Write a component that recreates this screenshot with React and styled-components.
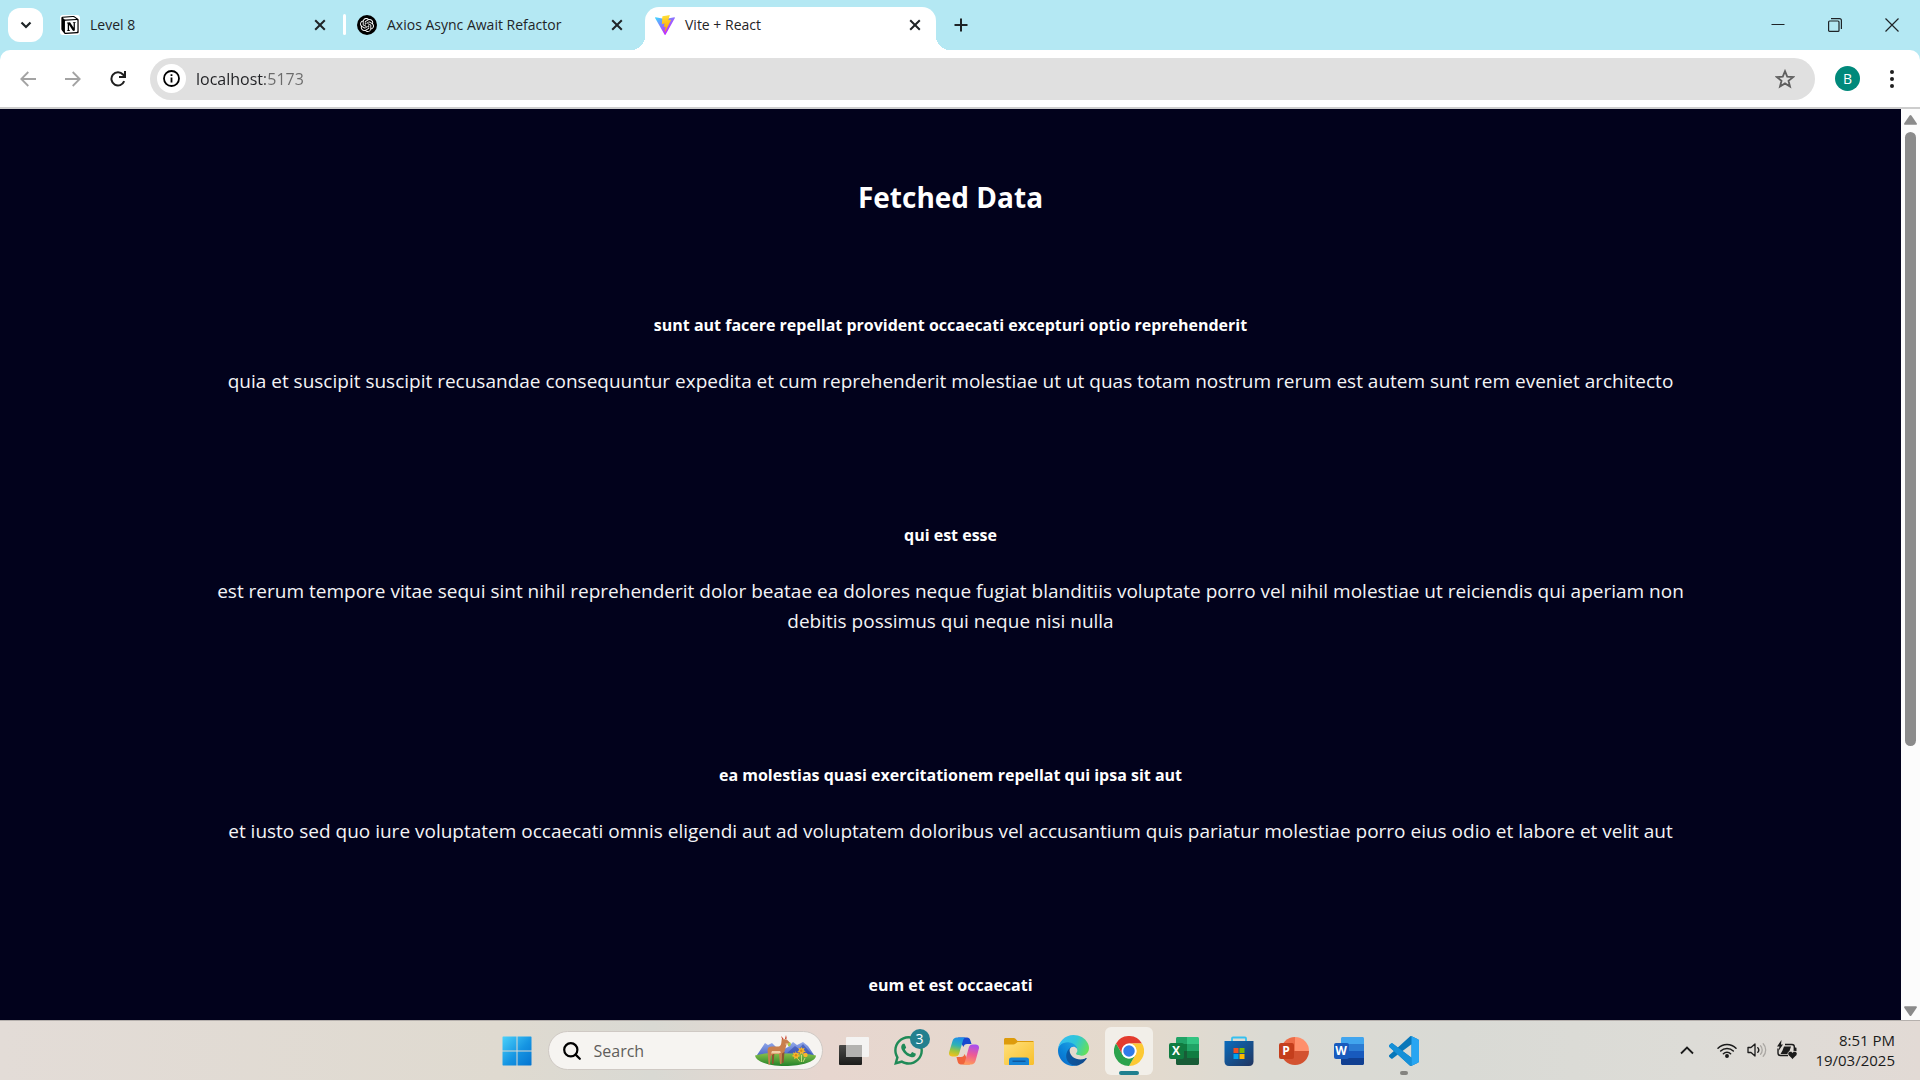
import React from "react";
import styled, { createGlobalStyle, css } from "styled-components";
import { SiOpenai, SiNotion } from "react-icons/si";
import { FaWhatsapp } from "react-icons/fa";

const GlobalStyle = createGlobalStyle`
  *, *::before, *::after { box-sizing: border-box; }
  body { margin: 0; overflow: hidden; font-family: "Open Sans", "Noto Sans", sans-serif; }
  button, input { font: inherit; color: inherit; }
  button { border: 0; background: none; padding: 0; cursor: pointer; }
  svg { display: block; flex: none; }
`;

const Screen = styled.div`
  display: flex;
  flex-direction: column;
  height: 100vh;
  background: #b4e8f3;
`;

/* ---------- tab strip ---------- */

const TabStrip = styled.header`
  display: flex;
  align-items: flex-end;
  height: 50px;
  padding-left: 8px;
  color: #1f2427;
`;

const TabSearch = styled.button`
  display: grid;
  place-items: center;
  width: 35px;
  height: 34px;
  margin: 0 7px 8px 0;
  border-radius: 12px;
  background: #fff;
`;

const Tab = styled.div`
  position: relative;
  display: flex;
  align-items: center;
  width: ${(p) => (p.$active ? 291 : 297)}px;
  height: 43px;
  padding: 0 ${(p) => (p.$active ? 12 : 18)}px 7px 10px;
  font-size: 14px;
  line-height: 20px;
  ${(p) =>
    p.$active &&
    css`
      margin-left: 1px;
      background: #fff;
      border-radius: 14px 14px 0 0;
      &::before,
      &::after {
        content: "";
        position: absolute;
        bottom: 0;
        width: 14px;
        height: 14px;
      }
      &::before {
        left: -14px;
        background: radial-gradient(circle at 0 0, transparent 14px, #fff 14px);
      }
      &::after {
        right: -14px;
        background: radial-gradient(circle at 100% 0, transparent 14px, #fff 14px);
      }
    `}
`;

const TabTitle = styled.span`
  flex: 1;
  margin-left: 10px;
  white-space: nowrap;
`;

const TabDivider = styled.span`
  width: 3px;
  height: 21px;
  margin: 0 1px 15px -4px;
  border-radius: 2px;
  background: #fff;
`;

const CloseButton = styled.button`
  display: grid;
  place-items: center;
  width: 18px;
  height: 18px;
`;

const Favicon = styled.span`
  display: grid;
  place-items: center;
  width: 20px;
  height: 20px;
  border-radius: ${(p) => (p.$round ? "50%" : "3px")};
  background: ${(p) => p.$bg || "transparent"};
  color: ${(p) => p.$fg || "#000"};
`;

const NewTab = styled.button`
  display: grid;
  place-items: center;
  width: 34px;
  height: 34px;
  margin: 0 0 8px 8px;
`;

const WindowControls = styled.div`
  display: flex;
  align-self: stretch;
  margin-left: auto;
`;

const WindowButton = styled.button`
  display: grid;
  place-items: center;
  width: 57px;
`;

/* ---------- toolbar ---------- */

const Toolbar = styled.nav`
  display: flex;
  align-items: center;
  height: 59px;
  padding: 0 15px 0 10px;
  border-bottom: 2px solid #cdcdcd;
  border-radius: 10px 10px 0 0;
  background: #fff;
`;

const ToolButton = styled.button`
  display: grid;
  place-items: center;
  width: 35px;
  height: 35px;
  margin-right: 10px;
  color: ${(p) => (p.disabled ? "#a3a3a3" : "#1f1f1f")};
`;

const AddressBar = styled.div`
  display: flex;
  flex: 1;
  align-items: center;
  height: 42px;
  margin-left: 5px;
  padding: 0 20px 0 7px;
  border-radius: 21px;
  background: #e0e0e0;
`;

const SiteInfo = styled.button`
  display: grid;
  place-items: center;
  width: 29px;
  height: 29px;
  margin-right: 10px;
  border-radius: 50%;
  background: #fff;
`;

const AddressInput = styled.input`
  flex: 1;
  min-width: 0;
  padding: 0;
  border: 0;
  outline: 0;
  font-size: 16px;
  line-height: 24px;
  color: #202124;
  background: linear-gradient(90deg, #202124 0 69px, #6b6b6b 69px);
  background-clip: text;
  -webkit-text-fill-color: transparent;
`;

const StarButton = styled.button`
  display: grid;
  place-items: center;
  width: 20px;
  height: 34px;
  color: #5f5f5f;
`;

const Avatar = styled.button`
  width: 25px;
  height: 25px;
  margin: 0 19px 0 20px;
  border-radius: 50%;
  background: #00897b;
  color: #fff;
  font-size: 14px;
  line-height: 25px;
`;

const MenuButton = styled.button`
  display: grid;
  place-items: center;
  width: 26px;
  height: 34px;
`;

/* ---------- page ---------- */

const Viewport = styled.div`
  display: flex;
  flex: 1;
  min-height: 0;
  background: #02021c;
`;

const Page = styled.main`
  flex: 1;
  overflow: hidden;
  padding: 65px 200px 0;
  color: #fff;
  text-align: center;
`;

const PageTitle = styled.h2`
  margin: 0 0 93px;
  font-size: 28px;
  line-height: 46px;
  font-weight: 700;
`;

const Post = styled.article`
  margin-bottom: 127px;
`;

const PostTitle = styled.h5`
  margin: 0 0 28px;
  font-size: 16px;
  line-height: 25px;
  font-weight: 700;
`;

const PostBody = styled.p`
  margin: 0;
  font-size: 19px;
  line-height: 30px;
  color: #f4f4f6;
`;

const ScrollTrack = styled.div`
  display: flex;
  flex-direction: column;
  align-items: center;
  width: 19px;
  padding: 6px 0 4px;
  background: #fcfcfc;
`;

const ScrollThumb = styled.div`
  flex: 614;
  width: 11px;
  margin-top: 7px;
  border-radius: 6px;
  background: #8b8b8b;
`;

const ScrollRest = styled.div`
  flex: 260;
`;

/* ---------- taskbar ---------- */

const Taskbar = styled.footer`
  display: grid;
  grid-template-columns: 1fr auto 1fr;
  align-items: center;
  height: 60px;
  border-top: 1px solid #b5b0ad;
  background: linear-gradient(
    90deg,
    #e3dcd7 0%,
    #dfdad0 26%,
    #d9d9d3 34%,
    #e7d6cf 43%,
    #e4dacd 59%,
    #dbdad3 66%,
    #d9dad5 76%,
    #dddcd7 88%,
    #e2dad5 100%
  );
`;

const Dock = styled.div`
  display: flex;
  grid-column: 2;
  align-items: center;
  gap: 7px;
`;

const DockButton = styled.button`
  position: relative;
  display: grid;
  place-items: center;
  width: 48px;
  height: 48px;
  border-radius: 6px;
  background: ${(p) => (p.$active ? "#f2efe9" : "transparent")};
  &::after {
    content: "";
    position: absolute;
    bottom: 0;
    left: calc(50% - ${(p) => (p.$active ? 10 : 4)}px);
    width: ${(p) => (p.$active ? 20 : 8)}px;
    height: 4px;
    border-radius: 2px;
    background: ${(p) => (p.$active ? "#21808f" : "#84837f")};
    display: ${(p) => (p.$active || p.$running ? "block" : "none")};
  }
`;

const Badge = styled.span`
  position: absolute;
  top: 2px;
  right: 3px;
  width: 20px;
  height: 20px;
  border-radius: 50%;
  background: #23808f;
  color: #fff;
  font-size: 14px;
  line-height: 20px;
`;

const SearchBox = styled.label`
  display: flex;
  align-items: center;
  width: 275px;
  height: 39px;
  padding: 0 6px 0 14px;
  border: 1px solid #cfc9c4;
  border-radius: 20px;
  background: #f6f4f1;
`;

const SearchInput = styled.input`
  flex: 1;
  width: 100px;
  padding: 0 0 0 13px;
  border: 0;
  outline: 0;
  background: transparent;
  font-size: 16px;
  line-height: 24px;
  &::placeholder {
    color: #5f5d5b;
    opacity: 1;
  }
`;

const Tray = styled.div`
  display: flex;
  grid-column: 3;
  align-items: center;
  justify-self: end;
  gap: 10px;
  padding: 0 25px 2px 0;
  color: #1b1b1b;
`;

const TrayButton = styled.button`
  display: grid;
  place-items: center;
  width: 20px;
  height: 40px;
  margin-right: ${(p) => (p.$spaced ? 10 : 0)}px;
`;

const Clock = styled.time`
  margin-left: 8px;
  font-size: 15px;
  line-height: 20px;
  text-align: right;
`;

/* ---------- icons ---------- */

const Stroke = ({ size = 20, box = 20, w = 2, children, ...rest }) => (
  <svg width={size} height={size} viewBox={`0 0 ${box} ${box}`} fill="none" stroke="currentColor" strokeWidth={w} {...rest}>
    {children}
  </svg>
);

const CrossIcon = () => (
  <Stroke size={12} box={12} w={2}>
    <path d="M1.2 1.2l9.6 9.6M10.8 1.2l-9.6 9.6" />
  </Stroke>
);

const ViteIcon = () => (
  <svg width="20" height="20" viewBox="0 0 256 257">
    <defs>
      <linearGradient id="vite-a" x1="0" y1="0.1" x2="0.57" y2="0.8">
        <stop offset="0" stopColor="#41D1FF" />
        <stop offset="1" stopColor="#BD34FE" />
      </linearGradient>
      <linearGradient id="vite-b" x1="0.43" y1="0" x2="0.5" y2="0.89">
        <stop offset="0" stopColor="#FFEA83" />
        <stop offset="0.083" stopColor="#FFDD35" />
        <stop offset="1" stopColor="#FFA800" />
      </linearGradient>
    </defs>
    <path fill="url(#vite-a)" d="M255.153 37.938L134.897 252.976c-2.483 4.44-8.862 4.466-11.382.048L.875 37.958c-2.746-4.814 1.371-10.646 6.827-9.67l120.385 21.517a6.537 6.537 0 0 0 2.322-.004l117.867-21.483c5.438-.991 9.574 4.796 6.877 9.62Z" />
    <path fill="url(#vite-b)" d="M185.432.063L96.44 17.501a3.268 3.268 0 0 0-2.634 3.014l-5.474 92.456a3.268 3.268 0 0 0 3.997 3.378l24.777-5.718c2.318-.535 4.413 1.507 3.936 3.838l-7.361 36.047c-.495 2.426 1.782 4.5 4.151 3.78l15.304-4.649c2.372-.72 4.652 1.36 4.15 3.788l-11.698 56.621c-.732 3.542 3.979 5.473 5.943 2.437l1.313-2.028l72.516-144.72c1.215-2.423-.88-5.186-3.54-4.672l-25.505 4.922c-2.396.462-4.435-1.77-3.759-4.114l16.646-57.705c.677-2.35-1.37-4.583-3.769-4.113Z" />
  </svg>
);

const StartIcon = () => (
  <svg width="30" height="30" viewBox="0 0 30 30">
    <defs>
      <linearGradient id="start" gradientUnits="userSpaceOnUse" x1="0" y1="0" x2="30" y2="30">
        <stop offset="0" stopColor="#4cd3fb" />
        <stop offset="0.55" stopColor="#1594e2" />
        <stop offset="1" stopColor="#0372cf" />
      </linearGradient>
    </defs>
    <path fill="url(#start)" d="M1 0.5h13.5v14H.5V1zM15.500 .5H29l.5.5v13.500h-14zM.5 15.500h14v14H1l-.5-.5zM15.500 15.500h14V29l-.5.5H15.500z" />
  </svg>
);

const DeerIcon = () => (
  <svg width="61" height="31" viewBox="0 0 61 31">
    <defs>
      <linearGradient id="mount" x1="0" y1="0" x2="0" y2="1">
        <stop offset="0" stopColor="#93a9ea" />
        <stop offset="1" stopColor="#4562c4" />
      </linearGradient>
      <linearGradient id="grass" x1="0" y1="0" x2="0" y2="1">
        <stop offset="0" stopColor="#86bf4a" />
        <stop offset="1" stopColor="#23832a" />
      </linearGradient>
    </defs>
    <path fill="url(#mount)" d="M2 20L10 8l3 2 4-2 8 8 8-4 5-5 4 3 6-3 5 4 6 9v2H2z" />
    <path fill="#2f49ae" d="M32 18l8-7 4 3 4-5 5 6 5 5z" opacity=".6" />
    <path fill="url(#grass)" d="M0 20.500c8-2 16-3 28-2 12 0 24 0 33 2 0 6-14 10.500-31 10.500S1 26.500 0 20.500z" />
    <path fill="#8f5430" d="M17 17h2.500l-1 12H17zM27 17h2.500l-1 11H27z" />
    <path fill="#c97f4c" d="M12.500 15c0-2.500 2-3.500 4.500-3.500h6.500c1.500 0 2.500-1.500 2.800-3.500l.5-4 5 .5 3 3c.8 1-.2 2-1.500 2h-1.800L30 15c-.5 2-1.500 3-3 3.500L26.500 29H25l-1-10h-5.500l-2.800 2L15 29.500h-1.500L13 21z" />
    <path fill="#f1cfa6" d="M16 18.500h8l2-1-1-1.500h-8zM30.500 8.500h3.200l-1.500 1.300h-1.500z" />
    <path fill="#c8452f" d="M26 1l2.500 2.500-1 1.500zM31 0l.8 3.500-2 .8z" />
    <path fill="#a9cb45" d="M33 8.500l2-1.500 1 2-1 2.500-2-.5z" />
    <g fill="#f6b62c">
      <path d="M46 11.500l1.200 2 2.400-.6-.8 2.300 2 1.400-2.400.8.200 2.400-2-1.400-2 1.400.2-2.400-2.600-.8 2-1.400-.8-2.300 2.400.6z" />
      <path d="M40.500 16l1.200 2 2.400-.6-.8 2.300 2 1.400-2.400.8.200 2.400-2-1.400-2 1.400.2-2.400-2.600-.8 2-1.400-.8-2.300 2.400.6z" />
      <circle cx="50.500" cy="20" r="2.200" />
    </g>
    <g fill="#d98a14">
      <circle cx="41" cy="20.200" r="1.200" />
      <circle cx="46.300" cy="15.800" r="1.200" />
    </g>
    <path fill="none" stroke="#c9de7a" strokeWidth="1" d="M43 24l2 2.500M46.500 20v7M50 23l-2 4" />
  </svg>
);

const TaskViewIcon = () => (
  <svg width="30" height="30" viewBox="0 0 30 30">
    <defs>
      <linearGradient id="tv-d" x1="0" y1="0" x2="0" y2="1">
        <stop offset="0" stopColor="#4a4a48" />
        <stop offset="1" stopColor="#1c1c1b" />
      </linearGradient>
    </defs>
    <rect x="0" y="9" width="23" height="20" rx="1" fill="url(#tv-d)" />
    <rect x="7" y="1" width="23" height="20" rx="1" fill="#f4f3f2" />
    <rect x="7" y="9" width="16" height="12" fill="#b3b2b0" />
  </svg>
);

const CopilotIcon = () => (
  <svg width="30" height="30" viewBox="0 0 30 30">
    <defs>
      <linearGradient id="cp-a" x1="0.5" y1="0" x2="0.3" y2="1">
        <stop offset="0" stopColor="#1d8fe8" />
        <stop offset="0.4" stopColor="#2fb2b4" />
        <stop offset="0.7" stopColor="#9cc53e" />
        <stop offset="1" stopColor="#f4c21c" />
      </linearGradient>
      <linearGradient id="cp-b" x1="0.6" y1="0" x2="0.4" y2="1">
        <stop offset="0" stopColor="#a64df0" />
        <stop offset="0.5" stopColor="#ee5a94" />
        <stop offset="1" stopColor="#ff9a5a" />
      </linearGradient>
    </defs>
    <path fill="#1747cf" d="M9 1.500h9c1.800 0 2.800 1 3.300 2.700L22.500 8H18c-2 0-3 1-3.600 3z" />
    <path fill="url(#cp-a)" d="M8 1.500h8.500c-1.500.5-2 1.500-2.500 3l-3.800 13c-.6 2-1.700 3-3.700 3H3.400c-2.500 0-4-1.800-3.200-4.600L3.500 5C4.200 2.800 5.500 1.500 8 1.500z" />
    <path fill="#f0643c" d="M21 28.500h-9c-1.800 0-2.800-1-3.300-2.700L7.500 21H12c2 0 3-1 3.600-3z" />
    <path fill="url(#cp-b)" d="M22 28.500h-8.500c1.500-.5 2-1.500 2.500-3l3.800-14c.6-2 1.700-3 3.700-3h3.100c2.500 0 4 1.800 3.200 4.600L26.500 25c-.7 2.200-2 3.500-4.500 3.500z" />
  </svg>
);

const FolderIcon = () => (
  <svg width="30" height="30" viewBox="0 0 30 30">
    <defs>
      <linearGradient id="fold" x1="0" y1="0" x2="1" y2="1">
        <stop offset="0" stopColor="#ffe07a" />
        <stop offset="1" stopColor="#f8bf2b" />
      </linearGradient>
    </defs>
    <path fill="#dd9b0b" d="M0 3.500C0 2.700.7 2 1.500 2h8.300c.7 0 1.200.3 1.700.8L13.500 5H28.500c.8 0 1.500.7 1.500 1.500V12H0z" />
    <path fill="url(#fold)" d="M0 8.500h9.500c.8 0 1.300-.2 1.900-.7l1.600-1.300c.5-.4.900-.5 1.500-.5H30v21.500c0 .8-.7 1.500-1.500 1.500h-27C.7 29 0 28.300 0 27.500z" />
    <path fill="#1583d6" d="M5 24c0-1.700 1-2.500 2.500-2.500h15c1.500 0 2.500.8 2.500 2.500v5H5z" />
    <path stroke="#0a4f94" strokeWidth="1.200" d="M8.500 25.200h13" />
  </svg>
);

const EdgeIcon = () => (
  <svg width="31" height="31" viewBox="0 0 256 256">
    <defs>
      <linearGradient id="ed-a" x1="0" y1="0.5" x2="1" y2="0.5">
        <stop offset="0" stopColor="#0c59a4" />
        <stop offset="1" stopColor="#114a8b" />
      </linearGradient>
      <linearGradient id="ed-b" x1="0.8" y1="0.2" x2="0.2" y2="0.9">
        <stop offset="0" stopColor="#1b9de2" />
        <stop offset="0.6" stopColor="#0a82d8" />
        <stop offset="1" stopColor="#0b6ecb" />
      </linearGradient>
      <linearGradient id="ed-c" x1="0.05" y1="0.3" x2="1" y2="0.6">
        <stop offset="0" stopColor="#35bdf1" />
        <stop offset="0.5" stopColor="#2fc6d8" />
        <stop offset="1" stopColor="#66e058" />
      </linearGradient>
    </defs>
    <path fill="url(#ed-a)" d="M231 190.500c-3.400 1.800-6.900 3.400-10.500 4.700-11.500 4.300-23.600 6.500-35.900 6.500-47.300 0-88.500-32.500-88.500-74.300.1-11.400 6.400-21.900 16.400-27.300-42.800 1.800-53.800 46.400-53.800 72.500 0 73.900 68.100 81.400 82.800 81.400 7.900 0 19.800-2.300 27-4.600l1.300-.4c27.600-9.500 51-28.100 66.600-52.800 1.200-1.900.6-4.300-1.200-5.500-1.300-.8-2.900-.9-4.200-.2z" />
    <path fill="url(#ed-b)" d="M105.700 241.400c-8.900-5.500-16.600-12.800-22.700-21.300-26.300-36-18.400-86.500 17.600-112.800 3.800-2.700 7.700-5.200 11.900-7.200 3.100-1.500 8.400-4.100 15.500-4 10.100.1 19.600 4.900 25.700 13 4 5.400 6.300 11.900 6.400 18.700 0-.2 24.500-79.600-80-79.600-43.900 0-80 41.700-80 78.200-.2 19.300 4 38.500 12.100 56 27.600 58.800 94.800 87.600 156.400 67.100-21.100 6.600-44.100 3.700-62.900-8.100z" />
    <path fill="url(#ed-c)" d="M152.300 148.900c-.8 1-3.300 2.500-3.300 5.700 0 2.600 1.700 5.100 4.700 7.200 14.400 10 41.500 8.700 41.600 8.700 10.700 0 21.100-2.900 30.300-8.300 18.800-11 30.400-31.100 30.400-52.900.3-22.400-8-37.300-11.300-43.900C223.500 23.900 177.700 0 128 0 58 0 1 56.200 0 126.200c.5-36.500 36.800-66 80-66 3.500 0 23.500.3 42 10.100 16.300 8.600 24.900 18.900 30.800 29.200 6.200 10.700 7.300 24.100 7.300 29.500 0 5.300-2.700 13.300-7.800 19.900z" />
  </svg>
);

const ChromeIcon = () => (
  <svg width="30" height="30" viewBox="0 0 48 48">
    <path fill="#e33b2e" d="M3.200 12A24 24 0 0 1 44.800 12H24a12 12 0 0 0-10.400 6z" />
    <path fill="#e33b2e" d="M3.200 12L13.600 30 24 12z" />
    <path fill="#fcc934" d="M44.800 12A24 24 0 0 1 24 48l10.400-18A12 12 0 0 0 24 12z" />
    <path fill="#2ba24c" d="M24 48A24 24 0 0 1 3.200 12l10.400 18A12 12 0 0 0 34.400 30z" />
    <circle cx="24" cy="24" r="12" fill="#fff" />
    <circle cx="24" cy="24" r="9.200" fill="#2f7bea" />
  </svg>
);

const LetterTile = styled.span`
  position: absolute;
  top: 16px;
  left: 9px;
  width: 15px;
  height: 16px;
  border-radius: 2px;
  background: ${(p) => p.$color};
  color: #fff;
  font-size: 12px;
  font-weight: 700;
  line-height: 16px;
`;

const ExcelIcon = () => (
  <svg width="30" height="30" viewBox="0 0 30 30">
    <path fill="#21a366" d="M7 2.500C7 1.700 7.700 1 8.500 1H18v14H7z" />
    <path fill="#33c481" d="M18 1h10.500c.8 0 1.500.7 1.500 1.500V8H18z" />
    <path fill="#21a366" d="M18 8h12v7H18z" />
    <path fill="#107c41" d="M18 15h12v7H18zM7 8h11v7H7z" />
    <path fill="#185c37" d="M7 15h11v7h12v5.500c0 .8-.7 1.500-1.500 1.500h-20c-.8 0-1.500-.7-1.500-1.500z" />
  </svg>
);

const WordIcon = () => (
  <svg width="30" height="30" viewBox="0 0 30 30">
    <path fill="#41a5ee" d="M7 2.500C7 1.700 7.700 1 8.500 1h20c.8 0 1.500.7 1.500 1.500V8H7z" />
    <path fill="#2b7cd3" d="M7 8h23v7H7z" />
    <path fill="#185abd" d="M7 15h23v7H7z" />
    <path fill="#103f91" d="M7 22h23v5.500c0 .8-.7 1.500-1.500 1.500h-20c-.8 0-1.500-.7-1.500-1.500z" />
  </svg>
);

const PowerPointIcon = () => (
  <svg width="30" height="30" viewBox="0 0 30 30">
    <path fill="#ed6c47" d="M16 1v14H2A14 14 0 0 1 16 1z" />
    <path fill="#ff8f6b" d="M16 1a14 14 0 0 1 14 14H16z" />
    <path fill="#d35230" d="M2 15h28a14 14 0 0 1-28 0z" />
  </svg>
);

const StoreIcon = () => (
  <svg width="30" height="30" viewBox="0 0 30 30">
    <defs>
      <linearGradient id="store" x1="0" y1="0" x2="1" y2="1">
        <stop offset="0" stopColor="#0a6cbd" />
        <stop offset="1" stopColor="#22355f" />
      </linearGradient>
    </defs>
    <path fill="none" stroke="#35c0f0" strokeWidth="1.800" d="M8 6V2.500C8 1.700 8.500 1.500 9 1.500h12c.6 0 1 .3 1 1V6" />
    <path fill="url(#store)" d="M.5 5h29v20.500c0 2.500-1.500 4.500-4.500 4.500H5C2 30 .5 28 .5 25.500z" />
    <path fill="#f25022" d="M9.500 12h5v5h-5z" />
    <path fill="#7fba00" d="M15.500 12h5v5h-5z" />
    <path fill="#00a4ef" d="M9.500 18h5v5h-5z" />
    <path fill="#ffb900" d="M15.500 18h5v5h-5z" />
  </svg>
);

const CodeIcon = () => (
  <svg width="30" height="30" viewBox="0 0 24 24">
    <path fill="#0877b9" d="M23.150 2.587L18.210.21a1.494 1.494 0 0 0-1.705.29l-9.460 8.630-4.120-3.128a.999.999 0 0 0-1.276.057L.327 7.261A1 1 0 0 0 .326 8.740L3.899 12 .326 15.260a1 1 0 0 0 .001 1.479L1.650 17.940a.999.999 0 0 0 1.276.057l4.120-3.128 9.460 8.630a1.492 1.492 0 0 0 1.704.29l4.942-2.377A1.500 1.500 0 0 0 24 20.060V3.939a1.500 1.500 0 0 0-.85-1.352zm-5.146 14.861L10.826 12l7.178-5.448v10.896z" />
    <path fill="#1690d8" d="M1.650 6.060a1 1 0 0 1 1.276-.058L18 17.450v6.300a1.500 1.500 0 0 1-1.500-.25L.327 8.740a1 1 0 0 1 0-1.479z" />
    <path fill="#27a5f2" d="M18 .12l5.150 2.467c.5.250.85.750.85 1.352V20.060c0 .6-.35 1.100-.85 1.352L18 23.880z" />
  </svg>
);

const WifiIcon = () => (
  <Stroke w={1.5} strokeLinecap="round">
    <path d="M1 8.200a12.700 12.700 0 0 1 18 0M3.700 11a8.900 8.900 0 0 1 12.600 0M6.400 13.700a5.100 5.100 0 0 1 7.200 0" />
    <circle cx="10" cy="16" r="1.200" fill="currentColor" />
  </Stroke>
);

const VolumeIcon = () => (
  <Stroke w={1.300} strokeLinejoin="round" strokeLinecap="round">
    <path d="M1 7.500h3L8 4v12l-4-3.500H1zM10.800 7.600a3.600 3.600 0 0 1 0 4.800" />
    <path stroke="#aaa7a3" d="M13.500 5.800a6 6 0 0 1 0 8.400M16.200 3.800a9 9 0 0 1 0 12.400" />
  </Stroke>
);

const BatteryIcon = () => (
  <svg width="20" height="20" viewBox="0 0 20 20">
    <path fill="none" stroke="currentColor" strokeWidth="1.400" d="M8 4.500h7c1.500 0 2.300.8 2.300 2.300V11M1 8.500V13c0 1.700 1 2.500 2.500 2.500H11" />
    <path fill="currentColor" d="M7 6.500h7L11.500 14H3.500l2-3.500zM17.500 7.500h1c.8 0 1 .3 1 1V11h-2zM4.500 0L0 6.500h2.500L1.500 11 6 4.500H4z" />
    <path fill="currentColor" stroke="#dfdbd6" strokeWidth=".8" d="M15.500 19.300l-4.100-4c-2-2.800 1.800-5.500 4.100-2.900 2.300-2.600 6.100.1 4.100 2.900z" />
  </svg>
);

/* ---------- data ---------- */

const posts = [
  {
    title: "sunt aut facere repellat provident occaecati excepturi optio reprehenderit",
    body: "quia et suscipit suscipit recusandae consequuntur expedita et cum reprehenderit molestiae ut ut quas totam nostrum rerum est autem sunt rem eveniet architecto",
  },
  {
    title: "qui est esse",
    body: "est rerum tempore vitae sequi sint nihil reprehenderit dolor beatae ea dolores neque fugiat blanditiis voluptate porro vel nihil molestiae ut reiciendis qui aperiam non debitis possimus qui neque nisi nulla",
  },
  {
    title: "ea molestias quasi exercitationem repellat qui ipsa sit aut",
    body: "et iusto sed quo iure voluptatem occaecati omnis eligendi aut ad voluptatem doloribus vel accusantium quis pariatur molestiae porro eius odio et labore et velit aut",
  },
  { title: "eum et est occaecati" },
];

export default function App() {
  return (
    <Screen>
      <GlobalStyle />
      <TabStrip>
        <TabSearch aria-label="Search tabs">
          <Stroke size={12} box={12} w={2.200}>
            <path d="M1.500 3.500L6 8l4.500-4.500" />
          </Stroke>
        </TabSearch>
        <Tab>
          <Favicon $bg="#fff">
            <SiNotion size={18} />
          </Favicon>
          <TabTitle>Level 8</TabTitle>
          <CloseButton aria-label="Close Level 8">
            <CrossIcon />
          </CloseButton>
        </Tab>
        <TabDivider />
        <Tab>
          <Favicon $round $bg="#000" $fg="#fff">
            <SiOpenai size={14} />
          </Favicon>
          <TabTitle>Axios Async Await Refactor</TabTitle>
          <CloseButton aria-label="Close Axios Async Await Refactor">
            <CrossIcon />
          </CloseButton>
        </Tab>
        <Tab $active>
          <Favicon>
            <ViteIcon />
          </Favicon>
          <TabTitle>Vite + React</TabTitle>
          <CloseButton aria-label="Close Vite + React">
            <CrossIcon />
          </CloseButton>
        </Tab>
        <NewTab aria-label="New tab">
          <Stroke size={14} box={14} w={2}>
            <path d="M7 .5v13M.5 7h13" />
          </Stroke>
        </NewTab>
        <WindowControls>
          <WindowButton aria-label="Minimize">
            <Stroke size={14} box={14} w={1}>
              <path d="M.5 6.500h13" />
            </Stroke>
          </WindowButton>
          <WindowButton aria-label="Restore">
            <Stroke size={14} box={14} w={1.200}>
              <rect x=".6" y="3" width="10.400" height="10.400" rx="1" />
              <path d="M3 .7h8.500c1.200 0 1.900.7 1.900 1.900V11" />
            </Stroke>
          </WindowButton>
          <WindowButton aria-label="Close">
            <Stroke size={14} box={14} w={1.200}>
              <path d="M.5.5l13 13M13.500.5l-13 13" />
            </Stroke>
          </WindowButton>
        </WindowControls>
      </TabStrip>

      <Toolbar>
        <ToolButton aria-label="Back" disabled>
          <Stroke size={16} box={16} w={1.800}>
            <path d="M16 8H1.500M8.300 1L1.300 8l7 7" />
          </Stroke>
        </ToolButton>
        <ToolButton aria-label="Forward" disabled>
          <Stroke size={16} box={16} w={1.800}>
            <path d="M0 8h14.500M7.700 1l7 7-7 7" />
          </Stroke>
        </ToolButton>
        <ToolButton aria-label="Reload">
          <Stroke size={16} box={16} w={2}>
            <path d="M14.200 10.200A6.600 6.600 0 1 1 13 3.500l1.500 1.700" />
            <path d="M15 0v6H9" />
          </Stroke>
        </ToolButton>
        <AddressBar>
          <SiteInfo aria-label="View site information">
            <Stroke size={17} box={17} w={1.800}>
              <circle cx="8.500" cy="8.500" r="7.500" />
              <path d="M8.500 7.500v5M8.500 4.300v1.800" />
            </Stroke>
          </SiteInfo>
          <AddressInput aria-label="Address" defaultValue="localhost:5173" spellCheck="false" />
          <StarButton aria-label="Bookmark this tab">
            <Stroke w={1.800}>
              <path d="M10 2.200l2.200 5.500 5.900.4-4.600 3.700 1.500 5.700-5-3.100-5 3.100 1.500-5.700-4.600-3.700 5.900-.4z" />
            </Stroke>
          </StarButton>
        </AddressBar>
        <Avatar aria-label="Profile B">B</Avatar>
        <MenuButton aria-label="Menu">
          <svg width="4" height="18" viewBox="0 0 4 18" fill="#1f1f1f">
            <circle cx="2" cy="2" r="2" />
            <circle cx="2" cy="9" r="2" />
            <circle cx="2" cy="16" r="2" />
          </svg>
        </MenuButton>
      </Toolbar>

      <Viewport>
        <Page>
          <PageTitle>Fetched Data</PageTitle>
          {posts.map((post) => (
            <Post key={post.title}>
              <PostTitle>{post.title}</PostTitle>
              {post.body && <PostBody>{post.body}</PostBody>}
            </Post>
          ))}
        </Page>
        <ScrollTrack>
          <svg width="13" height="10" viewBox="0 0 13 10" fill="#8b8b8b">
            <path d="M5.600.6c.5-.7 1.300-.7 1.800 0l5.300 7.600c.5.800.1 1.600-.8 1.600H1.100c-.9 0-1.300-.8-.8-1.600z" />
          </svg>
          <ScrollThumb />
          <ScrollRest />
          <svg width="13" height="10" viewBox="0 0 13 10" fill="#8b8b8b">
            <path d="M5.600 9.400c.5.700 1.300.7 1.800 0l5.300-7.600c.5-.8.1-1.600-.8-1.600H1.100C.2.200-.2 1 .3 1.800z" />
          </svg>
        </ScrollTrack>
      </Viewport>

      <Taskbar>
        <Dock>
          <DockButton aria-label="Start">
            <StartIcon />
          </DockButton>
          <SearchBox>
            <Stroke size={18} box={18} w={2.200} strokeLinecap="round">
              <circle cx="7.800" cy="7.800" r="6.600" />
              <path d="M12.600 12.600l4.200 4.200" />
            </Stroke>
            <SearchInput type="text" placeholder="Search" aria-label="Search" />
            <DeerIcon />
          </SearchBox>
          <DockButton aria-label="Task view">
            <TaskViewIcon />
          </DockButton>
          <DockButton aria-label="WhatsApp, 3 unread">
            <FaWhatsapp size={33} color="#1f8a57" />
            <Badge>3</Badge>
          </DockButton>
          <DockButton aria-label="Copilot">
            <CopilotIcon />
          </DockButton>
          <DockButton aria-label="File Explorer">
            <FolderIcon />
          </DockButton>
          <DockButton aria-label="Edge">
            <EdgeIcon />
          </DockButton>
          <DockButton aria-label="Chrome" $active>
            <ChromeIcon />
          </DockButton>
          <DockButton aria-label="Excel">
            <ExcelIcon />
            <LetterTile $color="#107c41">X</LetterTile>
          </DockButton>
          <DockButton aria-label="Microsoft Store">
            <StoreIcon />
          </DockButton>
          <DockButton aria-label="PowerPoint">
            <PowerPointIcon />
            <LetterTile $color="#c43e1c">P</LetterTile>
          </DockButton>
          <DockButton aria-label="Word">
            <WordIcon />
            <LetterTile $color="#185abd">W</LetterTile>
          </DockButton>
          <DockButton aria-label="Visual Studio Code" $running>
            <CodeIcon />
          </DockButton>
        </Dock>
        <Tray>
          <TrayButton aria-label="Hidden icons" $spaced>
            <Stroke size={14} box={14} w={1.800}>
              <path d="M1 10.500l6-6 6 6" />
            </Stroke>
          </TrayButton>
          <TrayButton aria-label="Network">
            <WifiIcon />
          </TrayButton>
          <TrayButton aria-label="Volume">
            <VolumeIcon />
          </TrayButton>
          <TrayButton aria-label="Battery">
            <BatteryIcon />
          </TrayButton>
          <Clock>
            8:51 PM
            <br />
            19/03/2025
          </Clock>
        </Tray>
      </Taskbar>
    </Screen>
  );
}
